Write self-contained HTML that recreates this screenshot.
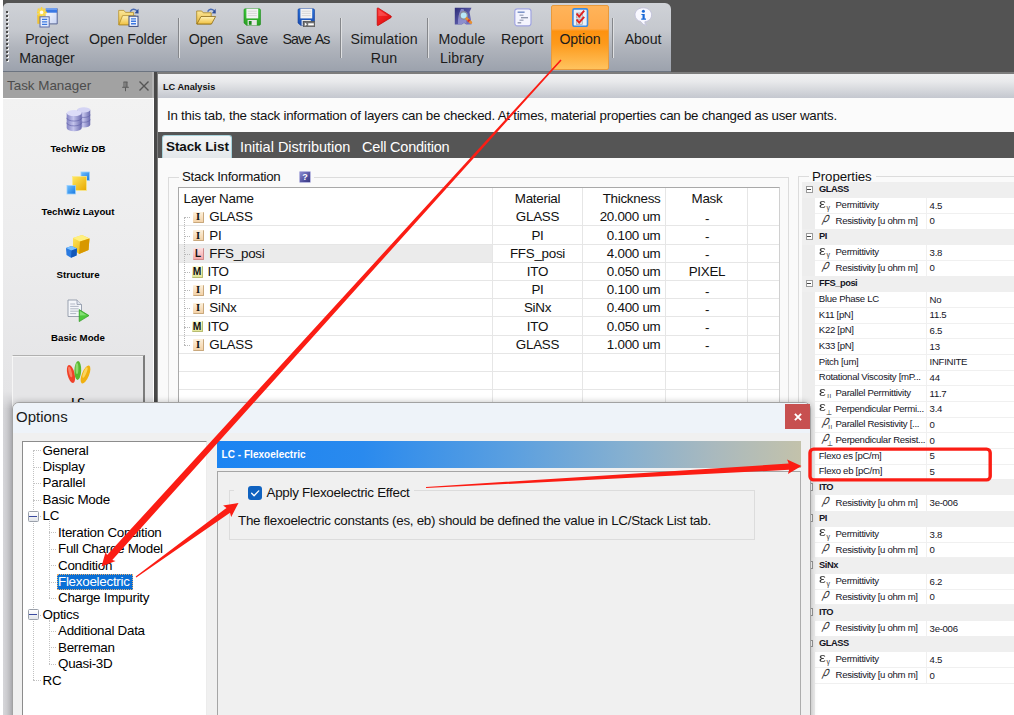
<!DOCTYPE html>
<html><head><meta charset="utf-8"><title>LC Analysis</title>
<style>
*{box-sizing:border-box;margin:0;padding:0}
html,body{width:1014px;height:715px;overflow:hidden;background:#fff;font-family:"Liberation Sans",sans-serif;}
.a{position:absolute}
.t{position:absolute;white-space:nowrap;color:#000}
#tb{left:3px;top:3px;width:668px;height:67.8px;background:linear-gradient(#cfd2d7 0%,#c5c8ce 40%,#b0b4bc 66%,#9ca2ad 100%);border-radius:5px 6px 0 0}
.tbl{position:absolute;font-size:14.2px;color:#1c1c1c;text-align:center;line-height:19px;white-space:nowrap;transform:translateX(-50%);letter-spacing:-0.1px}
.sep{position:absolute;top:18px;width:1px;height:40px;background:#85878b;box-shadow:1px 0 0 #dfe0e2}
.sbl{position:absolute;font-size:9.7px;font-weight:bold;color:#000;white-space:nowrap;transform:translateX(-50%);left:78px}
.tc{position:absolute;font-size:13.4px;letter-spacing:-0.27px;white-space:nowrap;color:#111;line-height:18px}
.cc{transform:translateX(-50%)}
.pn{position:absolute;font-size:9.6px;letter-spacing:-0.3px;color:#15151f;white-space:nowrap;line-height:15px}
.pb{font-weight:bold;font-size:9.3px;letter-spacing:-0.45px}
.ti{position:absolute;font-size:13.4px;letter-spacing:-0.27px;color:#000;white-space:nowrap;line-height:17px}
</style></head><body>
<div class="a" style="left:3px;top:0;width:1011px;height:72.3px;background:#535353"></div>
<div class="a" id="tb"></div>
<div class="a" style="left:3px;top:70.7px;width:668px;height:1.4px;background:#6c7480"></div>
<div class="a" style="left:157px;top:72px;width:857px;height:2px;background:#7c7c7c"></div>
<div class="a" style="left:6px;top:11px;width:2px;height:2px;background:#4a4a4a;box-shadow:1px 1px 0 #f4f4f4"></div>
<div class="a" style="left:6px;top:15px;width:2px;height:2px;background:#4a4a4a;box-shadow:1px 1px 0 #f4f4f4"></div>
<div class="a" style="left:6px;top:19px;width:2px;height:2px;background:#4a4a4a;box-shadow:1px 1px 0 #f4f4f4"></div>
<div class="a" style="left:6px;top:23px;width:2px;height:2px;background:#4a4a4a;box-shadow:1px 1px 0 #f4f4f4"></div>
<div class="a" style="left:6px;top:27px;width:2px;height:2px;background:#4a4a4a;box-shadow:1px 1px 0 #f4f4f4"></div>
<div class="a" style="left:6px;top:31px;width:2px;height:2px;background:#4a4a4a;box-shadow:1px 1px 0 #f4f4f4"></div>
<div class="a" style="left:6px;top:35px;width:2px;height:2px;background:#4a4a4a;box-shadow:1px 1px 0 #f4f4f4"></div>
<div class="a" style="left:6px;top:39px;width:2px;height:2px;background:#4a4a4a;box-shadow:1px 1px 0 #f4f4f4"></div>
<div class="a" style="left:6px;top:43px;width:2px;height:2px;background:#4a4a4a;box-shadow:1px 1px 0 #f4f4f4"></div>
<div class="a" style="left:6px;top:47px;width:2px;height:2px;background:#4a4a4a;box-shadow:1px 1px 0 #f4f4f4"></div>
<div class="a" style="left:6px;top:51px;width:2px;height:2px;background:#4a4a4a;box-shadow:1px 1px 0 #f4f4f4"></div>
<div class="a" style="left:6px;top:55px;width:2px;height:2px;background:#4a4a4a;box-shadow:1px 1px 0 #f4f4f4"></div>
<div class="a" style="left:6px;top:59px;width:2px;height:2px;background:#4a4a4a;box-shadow:1px 1px 0 #f4f4f4"></div>
<div class="a" style="left:551px;top:5px;width:58px;height:65px;background:linear-gradient(#ffb45a 0%,#ffa94a 36%,#fd9210 40%,#fd9a1c 60%,#ffc35e 100%);border:1px solid #e89a3c;border-radius:2px"></div>
<div class="tbl" style="left:47px;top:30px">Project<br>Manager</div>
<div class="tbl" style="left:128px;top:30px">Open Folder</div>
<div class="tbl" style="left:206px;top:30px">Open</div>
<div class="tbl" style="left:252px;top:30px">Save</div>
<div class="tbl" style="left:306px;top:30px;letter-spacing:-0.95px;word-spacing:1.6px">Save As</div>
<div class="tbl" style="left:384px;top:30px;letter-spacing:0.1px">Simulation<br>Run</div>
<div class="tbl" style="left:462px;top:30px;letter-spacing:0.1px">Module<br>Library</div>
<div class="tbl" style="left:522px;top:30px">Report</div>
<div class="tbl" style="left:580px;top:30px">Option</div>
<div class="tbl" style="left:643px;top:30px">About</div>
<div class="sep" style="left:178px"></div>
<div class="sep" style="left:340px"></div>
<div class="sep" style="left:427px"></div>
<div class="sep" style="left:612px"></div>
<div class="a" style="left:3px;top:72.3px;width:151px;height:26.2px;background:linear-gradient(90deg,#a2a2a2 149.5px,#b4b4b4 149.5px)"></div>
<div class="a" style="left:3px;top:98.5px;width:150px;height:617px;background:linear-gradient(#f2f2f2 0%,#ececed 25%,#e4e4e6 48%,#e2e2e4 100%)"></div>
<div class="a" style="left:153.9px;top:72.3px;width:5px;height:643px;background:linear-gradient(90deg,#484848 3.1px,#7c7c7c 3.1px)"></div>
<div class="t" style="left:7px;top:77px;font-size:13.4px;color:#4c4c4c;letter-spacing:0px;line-height:18px">Task Manager</div>
<div class="a" style="left:12px;top:355px;width:133px;height:60px;background:#e5e5e7;border-top:1px solid #b0b0b0;border-right:2px solid #7c7c7c;border-left:1px solid #f6f6f6;box-shadow:inset 0 1px 0 #f4f4f4"></div>
<div class="sbl" style="top:143.0px">TechWiz DB</div>
<div class="sbl" style="top:205.9px">TechWiz Layout</div>
<div class="sbl" style="top:268.8px">Structure</div>
<div class="sbl" style="top:331.7px">Basic Mode</div>
<div class="sbl" style="top:394.6px">LC</div>
<div class="a" style="left:158px;top:73.8px;width:856px;height:24.2px;background:linear-gradient(#eff0f1 0%,#e9eaec 30%,#d8dade 62%,#c4c7cf 100%)"></div>
<div class="a" style="left:158px;top:98px;width:856px;height:34px;background:#fbfbfb"></div>
<div class="a" style="left:158px;top:132px;width:856px;height:26px;background:#555555"></div>
<div class="a" style="left:158px;top:158px;width:856px;height:557px;background:#fafafa"></div>
<div class="t" style="left:163px;top:80.9px;font-size:9.2px;font-weight:bold;color:#111;line-height:12px">LC Analysis</div>
<div class="t" style="left:167px;top:108px;font-size:13.3px;letter-spacing:-0.238px;color:#111;line-height:16px">In this tab, the stack information of layers can be checked. At times, material properties can be changed as user wants.</div>
<div class="a" style="left:162px;top:135px;width:70px;height:23px;background:linear-gradient(#f4f6f7,#e3e7ea);border:1px solid #a8d4dc;border-bottom:none;border-radius:3px 3px 0 0"></div>
<div class="t" style="left:166px;top:137px;font-size:13.5px;font-weight:bold;color:#111;line-height:20px;letter-spacing:-0.1px">Stack List</div>
<div class="t" style="left:240px;top:137px;font-size:14.5px;color:#fff;line-height:20px;letter-spacing:0">Initial Distribution</div>
<div class="t" style="left:362px;top:137px;font-size:14.5px;color:#fff;line-height:20px;letter-spacing:-0.2px">Cell Condition</div><div class="a" style="left:168px;top:177px;width:621px;height:545px;border:1px solid #dcdcdc"></div>
<div class="a" style="left:179px;top:168px;width:135px;height:16px;background:#fafafa"></div>
<div class="t" style="left:182px;top:169px;font-size:13.3px;letter-spacing:-0.3px;color:#111;line-height:16px">Stack Information</div>
<div class="a" style="left:299px;top:171px;width:12px;height:12px;background:linear-gradient(135deg,#8a8ad0,#4a4a98 70%,#3a3a80);border:1px solid #b8b8e0;border-radius:1px"></div>
<div class="t" style="left:302.3px;top:171.5px;font-size:9px;font-weight:bold;color:#fff;line-height:11px">?</div>
<div class="a" style="left:178px;top:187px;width:602px;height:535px;background:#fff;border:1px solid #a9a9a9;border-right-color:#d0d0d0"></div>
<div class="a" style="left:179px;top:244px;width:313px;height:18px;background:#ebebeb"></div>
<div class="a" style="left:179px;top:225.4px;width:600px;height:1px;background:#e6e6e6"></div>
<div class="a" style="left:179px;top:243.6px;width:600px;height:1px;background:#e6e6e6"></div>
<div class="a" style="left:179px;top:261.8px;width:600px;height:1px;background:#e6e6e6"></div>
<div class="a" style="left:179px;top:280.0px;width:600px;height:1px;background:#e6e6e6"></div>
<div class="a" style="left:179px;top:298.2px;width:600px;height:1px;background:#e6e6e6"></div>
<div class="a" style="left:179px;top:316.4px;width:600px;height:1px;background:#e6e6e6"></div>
<div class="a" style="left:179px;top:334.6px;width:600px;height:1px;background:#e6e6e6"></div>
<div class="a" style="left:179px;top:352.8px;width:600px;height:1px;background:#e6e6e6"></div>
<div class="a" style="left:179px;top:371.0px;width:600px;height:1px;background:#e6e6e6"></div>
<div class="a" style="left:179px;top:389.2px;width:600px;height:1px;background:#e6e6e6"></div>
<div class="a" style="left:492px;top:188px;width:1px;height:530px;background:#e6e6e6"></div>
<div class="a" style="left:582px;top:188px;width:1px;height:530px;background:#e6e6e6"></div>
<div class="a" style="left:665px;top:188px;width:1px;height:530px;background:#e6e6e6"></div>
<div class="a" style="left:747px;top:188px;width:1px;height:530px;background:#e6e6e6"></div>
<div class="tc" style="left:183.5px;top:190.2px">Layer Name</div>
<div class="tc cc" style="left:537.5px;top:190.2px">Material</div>
<div class="tc" style="right:353.5px;top:190.2px">Thickness</div>
<div class="tc cc" style="left:707px;top:190.2px">Mask</div>
<div class="a" style="left:184px;top:217.4px;width:6px;height:0;border-top:1px dotted #b8b8b8"></div>
<div class="a" style="left:192.5px;top:211.7px;width:11.5px;height:11.5px;background:linear-gradient(#fdf0dc,#f3d2a8);border-right:1px solid #c9a87c;border-bottom:1px solid #c9a87c;border-radius:1px"></div>
<div class="t" style="left:196px;top:211.4px;font-family:'Liberation Serif',serif;font-size:10.5px;font-weight:bold;line-height:12px;color:#111">I</div>
<div class="tc" style="left:209.3px;top:208.39999999999998px">GLASS</div>
<div class="tc cc" style="left:537.5px;top:208.39999999999998px">GLASS</div>
<div class="tc" style="right:353.5px;top:208.39999999999998px">20.000 um</div>
<div class="tc cc" style="left:707px;top:210.0px">-</div>
<div class="a" style="left:184px;top:235.6px;width:6px;height:0;border-top:1px dotted #b8b8b8"></div>
<div class="a" style="left:192.5px;top:229.9px;width:11.5px;height:11.5px;background:linear-gradient(#fdf0dc,#f3d2a8);border-right:1px solid #c9a87c;border-bottom:1px solid #c9a87c;border-radius:1px"></div>
<div class="t" style="left:196px;top:229.6px;font-family:'Liberation Serif',serif;font-size:10.5px;font-weight:bold;line-height:12px;color:#111">I</div>
<div class="tc" style="left:209.3px;top:226.6px">PI</div>
<div class="tc cc" style="left:537.5px;top:226.6px">PI</div>
<div class="tc" style="right:353.5px;top:226.6px">0.100 um</div>
<div class="tc cc" style="left:707px;top:228.2px">-</div>
<div class="a" style="left:184px;top:253.8px;width:6px;height:0;border-top:1px dotted #b8b8b8"></div>
<div class="a" style="left:192.5px;top:248.1px;width:11.5px;height:11.5px;background:linear-gradient(#fde0e0,#f4a8a8);border-right:1px solid #d08888;border-bottom:1px solid #d08888;border-radius:1px"></div>
<div class="t" style="left:195.1px;top:247.8px;font-family:'Liberation Sans',serif;font-size:10px;font-weight:bold;line-height:12px;color:#111">L</div>
<div class="tc" style="left:209.3px;top:244.79999999999998px">FFS_posi</div>
<div class="tc cc" style="left:537.5px;top:244.79999999999998px">FFS_posi</div>
<div class="tc" style="right:353.5px;top:244.79999999999998px">4.000 um</div>
<div class="tc cc" style="left:707px;top:246.4px">-</div>
<div class="a" style="left:184px;top:272.0px;width:6px;height:0;border-top:1px dotted #b8b8b8"></div>
<div class="a" style="left:191.5px;top:266.3px;width:11.5px;height:11.5px;background:linear-gradient(#fbfbd8,#e2e69a);border-right:1px solid #b8bc70;border-bottom:1px solid #b8bc70;border-radius:1px"></div>
<div class="t" style="left:192.8px;top:266.0px;font-family:'Liberation Sans',serif;font-size:10.3px;font-weight:bold;line-height:12px;color:#111">M</div>
<div class="tc" style="left:207.5px;top:263.0px">ITO</div>
<div class="tc cc" style="left:537.5px;top:263.0px">ITO</div>
<div class="tc" style="right:353.5px;top:263.0px">0.050 um</div>
<div class="tc cc" style="left:707px;top:263.0px">PIXEL</div>
<div class="a" style="left:184px;top:290.2px;width:6px;height:0;border-top:1px dotted #b8b8b8"></div>
<div class="a" style="left:192.5px;top:284.5px;width:11.5px;height:11.5px;background:linear-gradient(#fdf0dc,#f3d2a8);border-right:1px solid #c9a87c;border-bottom:1px solid #c9a87c;border-radius:1px"></div>
<div class="t" style="left:196px;top:284.2px;font-family:'Liberation Serif',serif;font-size:10.5px;font-weight:bold;line-height:12px;color:#111">I</div>
<div class="tc" style="left:209.3px;top:281.2px">PI</div>
<div class="tc cc" style="left:537.5px;top:281.2px">PI</div>
<div class="tc" style="right:353.5px;top:281.2px">0.100 um</div>
<div class="tc cc" style="left:707px;top:282.8px">-</div>
<div class="a" style="left:184px;top:308.4px;width:6px;height:0;border-top:1px dotted #b8b8b8"></div>
<div class="a" style="left:192.5px;top:302.7px;width:11.5px;height:11.5px;background:linear-gradient(#fdf0dc,#f3d2a8);border-right:1px solid #c9a87c;border-bottom:1px solid #c9a87c;border-radius:1px"></div>
<div class="t" style="left:196px;top:302.4px;font-family:'Liberation Serif',serif;font-size:10.5px;font-weight:bold;line-height:12px;color:#111">I</div>
<div class="tc" style="left:209.3px;top:299.4px">SiNx</div>
<div class="tc cc" style="left:537.5px;top:299.4px">SiNx</div>
<div class="tc" style="right:353.5px;top:299.4px">0.400 um</div>
<div class="tc cc" style="left:707px;top:301.0px">-</div>
<div class="a" style="left:184px;top:326.6px;width:6px;height:0;border-top:1px dotted #b8b8b8"></div>
<div class="a" style="left:191.5px;top:320.9px;width:11.5px;height:11.5px;background:linear-gradient(#fbfbd8,#e2e69a);border-right:1px solid #b8bc70;border-bottom:1px solid #b8bc70;border-radius:1px"></div>
<div class="t" style="left:192.8px;top:320.6px;font-family:'Liberation Sans',serif;font-size:10.3px;font-weight:bold;line-height:12px;color:#111">M</div>
<div class="tc" style="left:207.5px;top:317.59999999999997px">ITO</div>
<div class="tc cc" style="left:537.5px;top:317.59999999999997px">ITO</div>
<div class="tc" style="right:353.5px;top:317.59999999999997px">0.050 um</div>
<div class="tc cc" style="left:707px;top:319.2px">-</div>
<div class="a" style="left:184px;top:344.8px;width:6px;height:0;border-top:1px dotted #b8b8b8"></div>
<div class="a" style="left:192.5px;top:339.1px;width:11.5px;height:11.5px;background:linear-gradient(#fdf0dc,#f3d2a8);border-right:1px solid #c9a87c;border-bottom:1px solid #c9a87c;border-radius:1px"></div>
<div class="t" style="left:196px;top:338.8px;font-family:'Liberation Serif',serif;font-size:10.5px;font-weight:bold;line-height:12px;color:#111">I</div>
<div class="tc" style="left:209.3px;top:335.79999999999995px">GLASS</div>
<div class="tc cc" style="left:537.5px;top:335.79999999999995px">GLASS</div>
<div class="tc" style="right:353.5px;top:335.79999999999995px">1.000 um</div>
<div class="tc cc" style="left:707px;top:337.4px">-</div>
<div class="a" style="left:184px;top:217px;width:0;height:128px;border-left:1px dotted #b8b8b8"></div>
<div class="a" style="left:798px;top:176px;width:230px;height:545px;border:1px solid #dcdcdc"></div>
<div class="a" style="left:809px;top:168px;width:67px;height:15px;background:#fafafa"></div>
<div class="t" style="left:812px;top:169px;font-size:13.3px;letter-spacing:-0.1px;color:#111;line-height:16px">Properties</div>
<div class="a" style="left:802px;top:183px;width:212px;height:532px;background:#fff"></div>
<div class="a" style="left:802px;top:183px;width:13px;height:532px;background:#ededed"></div>
<div class="a" style="left:802px;top:181.9px;width:212px;height:16.1px;background:#efefef"></div>
<div class="a" style="left:805.5px;top:185.5px;width:7.5px;height:7.5px;border:1px solid #9a9a9a;background:#fff"></div>
<div class="a" style="left:807.3px;top:188.8px;width:4px;height:1px;background:#444"></div>
<div class="pn pb" style="left:819px;top:182.2px">GLASS</div>
<div class="a" style="left:815px;top:212.9px;width:199px;height:1px;background:#f0f0f0"></div>
<div class="t" style="left:819.3px;top:196.6px;font-size:12.3px;transform:scaleX(1.25);transform-origin:left;line-height:15px;color:#3a3a3a">&#949;</div>
<div class="t" style="left:826.6px;top:203.2px;font-size:7px;line-height:9px;color:#333">&#947;</div>
<div class="pn" style="left:835.5px;top:197.1px">Permittivity</div>
<div class="pn" style="left:929.6px;top:197.7px">4.5</div>
<div class="a" style="left:815px;top:228.6px;width:199px;height:1px;background:#f0f0f0"></div>
<div class="t" style="left:822.6px;top:210.6px;font-size:12.2px;font-style:italic;line-height:15px;color:#333;transform:skewX(-16deg) scale(0.86,1.1)">&#961;</div>
<div class="pn" style="left:835.5px;top:212.7px">Resistivity [u ohm m]</div>
<div class="pn" style="left:929.6px;top:213.3px">0</div>
<div class="a" style="left:802px;top:228.9px;width:212px;height:16.1px;background:#efefef"></div>
<div class="a" style="left:805.5px;top:232.5px;width:7.5px;height:7.5px;border:1px solid #9a9a9a;background:#fff"></div>
<div class="a" style="left:807.3px;top:235.8px;width:4px;height:1px;background:#444"></div>
<div class="pn pb" style="left:819px;top:229.2px">PI</div>
<div class="a" style="left:815px;top:259.9px;width:199px;height:1px;background:#f0f0f0"></div>
<div class="t" style="left:819.3px;top:243.5px;font-size:12.3px;transform:scaleX(1.25);transform-origin:left;line-height:15px;color:#3a3a3a">&#949;</div>
<div class="t" style="left:826.6px;top:250.1px;font-size:7px;line-height:9px;color:#333">&#947;</div>
<div class="pn" style="left:835.5px;top:244.0px">Permittivity</div>
<div class="pn" style="left:929.6px;top:244.6px">3.8</div>
<div class="a" style="left:815px;top:275.6px;width:199px;height:1px;background:#f0f0f0"></div>
<div class="t" style="left:822.6px;top:257.6px;font-size:12.2px;font-style:italic;line-height:15px;color:#333;transform:skewX(-16deg) scale(0.86,1.1)">&#961;</div>
<div class="pn" style="left:835.5px;top:259.7px">Resistivity [u ohm m]</div>
<div class="pn" style="left:929.6px;top:260.3px">0</div>
<div class="a" style="left:802px;top:275.9px;width:212px;height:16.1px;background:#efefef"></div>
<div class="a" style="left:805.5px;top:279.5px;width:7.5px;height:7.5px;border:1px solid #9a9a9a;background:#fff"></div>
<div class="a" style="left:807.3px;top:282.8px;width:4px;height:1px;background:#444"></div>
<div class="pn pb" style="left:819px;top:276.2px">FFS_posi</div>
<div class="a" style="left:815px;top:306.9px;width:199px;height:1px;background:#f0f0f0"></div>
<div class="pn" style="left:818.8px;top:291.0px">Blue Phase LC</div>
<div class="pn" style="left:929.6px;top:291.6px">No</div>
<div class="a" style="left:815px;top:322.5px;width:199px;height:1px;background:#f0f0f0"></div>
<div class="pn" style="left:818.8px;top:306.7px">K11 [pN]</div>
<div class="pn" style="left:929.6px;top:307.3px">11.5</div>
<div class="a" style="left:815px;top:338.2px;width:199px;height:1px;background:#f0f0f0"></div>
<div class="pn" style="left:818.8px;top:322.3px">K22 [pN]</div>
<div class="pn" style="left:929.6px;top:322.9px">6.5</div>
<div class="a" style="left:815px;top:353.9px;width:199px;height:1px;background:#f0f0f0"></div>
<div class="pn" style="left:818.8px;top:338.0px">K33 [pN]</div>
<div class="pn" style="left:929.6px;top:338.6px">13</div>
<div class="a" style="left:815px;top:369.5px;width:199px;height:1px;background:#f0f0f0"></div>
<div class="pn" style="left:818.8px;top:353.7px">Pitch [um]</div>
<div class="pn" style="left:929.6px;top:354.3px">INFINITE</div>
<div class="a" style="left:815px;top:385.2px;width:199px;height:1px;background:#f0f0f0"></div>
<div class="pn" style="left:818.8px;top:369.3px">Rotational Viscosity [mP...</div>
<div class="pn" style="left:929.6px;top:369.9px">44</div>
<div class="a" style="left:815px;top:400.8px;width:199px;height:1px;background:#f0f0f0"></div>
<div class="t" style="left:819.3px;top:384.5px;font-size:12.3px;transform:scaleX(1.25);transform-origin:left;line-height:15px;color:#3a3a3a">&#949;</div>
<div class="t" style="left:827.2px;top:391.7px;font-size:6px;line-height:9px;letter-spacing:0.6px;color:#222">II</div>
<div class="pn" style="left:835.5px;top:385.0px">Parallel Permittivity</div>
<div class="pn" style="left:929.6px;top:385.6px">11.7</div>
<div class="a" style="left:815px;top:416.5px;width:199px;height:1px;background:#f0f0f0"></div>
<div class="t" style="left:819.3px;top:400.1px;font-size:12.3px;transform:scaleX(1.25);transform-origin:left;line-height:15px;color:#3a3a3a">&#949;</div>
<div class="t" style="left:826.2px;top:407.5px;font-size:6.5px;line-height:9px;color:#222">&#8869;</div>
<div class="pn" style="left:835.5px;top:400.6px">Perpendicular Permi...</div>
<div class="pn" style="left:929.6px;top:401.2px">3.4</div>
<div class="a" style="left:815px;top:432.2px;width:199px;height:1px;background:#f0f0f0"></div>
<div class="t" style="left:822.6px;top:414.2px;font-size:12.2px;font-style:italic;line-height:15px;color:#333;transform:skewX(-16deg) scale(0.86,1.1)">&#961;</div>
<div class="t" style="left:828.2px;top:423.0px;font-size:6px;line-height:9px;letter-spacing:0.6px;color:#222">II</div>
<div class="pn" style="left:835.5px;top:416.3px">Parallel Resistivity [...</div>
<div class="pn" style="left:929.6px;top:416.9px">0</div>
<div class="a" style="left:815px;top:447.8px;width:199px;height:1px;background:#f0f0f0"></div>
<div class="t" style="left:822.6px;top:429.9px;font-size:12.2px;font-style:italic;line-height:15px;color:#333;transform:skewX(-16deg) scale(0.86,1.1)">&#961;</div>
<div class="t" style="left:827px;top:438.9px;font-size:6.5px;line-height:9px;color:#222">&#8869;</div>
<div class="pn" style="left:835.5px;top:432.0px">Perpendicular Resist...</div>
<div class="pn" style="left:929.6px;top:432.6px">0</div>
<div class="a" style="left:815px;top:463.5px;width:199px;height:1px;background:#f0f0f0"></div>
<div class="pn" style="left:818.8px;top:447.6px">Flexo es [pC/m]</div>
<div class="pn" style="left:929.6px;top:448.2px">5</div>
<div class="a" style="left:815px;top:479.1px;width:199px;height:1px;background:#f0f0f0"></div>
<div class="pn" style="left:818.8px;top:463.3px">Flexo eb [pC/m]</div>
<div class="pn" style="left:929.6px;top:463.9px">5</div>
<div class="a" style="left:802px;top:479.4px;width:212px;height:16.1px;background:#efefef"></div>
<div class="a" style="left:805.5px;top:483.0px;width:7.5px;height:7.5px;border:1px solid #9a9a9a;background:#fff"></div>
<div class="a" style="left:807.3px;top:486.3px;width:4px;height:1px;background:#444"></div>
<div class="pn pb" style="left:819px;top:479.7px">ITO</div>
<div class="a" style="left:815px;top:510.5px;width:199px;height:1px;background:#f0f0f0"></div>
<div class="t" style="left:822.6px;top:492.5px;font-size:12.2px;font-style:italic;line-height:15px;color:#333;transform:skewX(-16deg) scale(0.86,1.1)">&#961;</div>
<div class="pn" style="left:835.5px;top:494.6px">Resistivity [u ohm m]</div>
<div class="pn" style="left:929.6px;top:495.2px">3e-006</div>
<div class="a" style="left:802px;top:510.8px;width:212px;height:16.1px;background:#efefef"></div>
<div class="a" style="left:805.5px;top:514.4px;width:7.5px;height:7.5px;border:1px solid #9a9a9a;background:#fff"></div>
<div class="a" style="left:807.3px;top:517.7px;width:4px;height:1px;background:#444"></div>
<div class="pn pb" style="left:819px;top:511.1px">PI</div>
<div class="a" style="left:815px;top:541.8px;width:199px;height:1px;background:#f0f0f0"></div>
<div class="t" style="left:819.3px;top:525.4px;font-size:12.3px;transform:scaleX(1.25);transform-origin:left;line-height:15px;color:#3a3a3a">&#949;</div>
<div class="t" style="left:826.6px;top:532.0px;font-size:7px;line-height:9px;color:#333">&#947;</div>
<div class="pn" style="left:835.5px;top:525.9px">Permittivity</div>
<div class="pn" style="left:929.6px;top:526.5px">3.8</div>
<div class="a" style="left:815px;top:557.4px;width:199px;height:1px;background:#f0f0f0"></div>
<div class="t" style="left:822.6px;top:539.5px;font-size:12.2px;font-style:italic;line-height:15px;color:#333;transform:skewX(-16deg) scale(0.86,1.1)">&#961;</div>
<div class="pn" style="left:835.5px;top:541.6px">Resistivity [u ohm m]</div>
<div class="pn" style="left:929.6px;top:542.2px">0</div>
<div class="a" style="left:802px;top:557.7px;width:212px;height:16.1px;background:#efefef"></div>
<div class="a" style="left:805.5px;top:561.3px;width:7.5px;height:7.5px;border:1px solid #9a9a9a;background:#fff"></div>
<div class="a" style="left:807.3px;top:564.6px;width:4px;height:1px;background:#444"></div>
<div class="pn pb" style="left:819px;top:558.0px">SiNx</div>
<div class="a" style="left:815px;top:588.8px;width:199px;height:1px;background:#f0f0f0"></div>
<div class="t" style="left:819.3px;top:572.4px;font-size:12.3px;transform:scaleX(1.25);transform-origin:left;line-height:15px;color:#3a3a3a">&#949;</div>
<div class="t" style="left:826.6px;top:579.0px;font-size:7px;line-height:9px;color:#333">&#947;</div>
<div class="pn" style="left:835.5px;top:572.9px">Permittivity</div>
<div class="pn" style="left:929.6px;top:573.5px">6.2</div>
<div class="a" style="left:815px;top:604.4px;width:199px;height:1px;background:#f0f0f0"></div>
<div class="t" style="left:822.6px;top:586.5px;font-size:12.2px;font-style:italic;line-height:15px;color:#333;transform:skewX(-16deg) scale(0.86,1.1)">&#961;</div>
<div class="pn" style="left:835.5px;top:588.6px">Resistivity [u ohm m]</div>
<div class="pn" style="left:929.6px;top:589.2px">0</div>
<div class="a" style="left:802px;top:604.7px;width:212px;height:16.1px;background:#efefef"></div>
<div class="a" style="left:805.5px;top:608.3px;width:7.5px;height:7.5px;border:1px solid #9a9a9a;background:#fff"></div>
<div class="a" style="left:807.3px;top:611.6px;width:4px;height:1px;background:#444"></div>
<div class="pn pb" style="left:819px;top:605.0px">ITO</div>
<div class="a" style="left:815px;top:635.7px;width:199px;height:1px;background:#f0f0f0"></div>
<div class="t" style="left:822.6px;top:617.8px;font-size:12.2px;font-style:italic;line-height:15px;color:#333;transform:skewX(-16deg) scale(0.86,1.1)">&#961;</div>
<div class="pn" style="left:835.5px;top:619.9px">Resistivity [u ohm m]</div>
<div class="pn" style="left:929.6px;top:620.5px">3e-006</div>
<div class="a" style="left:802px;top:636.0px;width:212px;height:16.1px;background:#efefef"></div>
<div class="a" style="left:805.5px;top:639.6px;width:7.5px;height:7.5px;border:1px solid #9a9a9a;background:#fff"></div>
<div class="a" style="left:807.3px;top:642.9px;width:4px;height:1px;background:#444"></div>
<div class="pn pb" style="left:819px;top:636.3px">GLASS</div>
<div class="a" style="left:815px;top:667.1px;width:199px;height:1px;background:#f0f0f0"></div>
<div class="t" style="left:819.3px;top:650.7px;font-size:12.3px;transform:scaleX(1.25);transform-origin:left;line-height:15px;color:#3a3a3a">&#949;</div>
<div class="t" style="left:826.6px;top:657.3px;font-size:7px;line-height:9px;color:#333">&#947;</div>
<div class="pn" style="left:835.5px;top:651.2px">Permittivity</div>
<div class="pn" style="left:929.6px;top:651.8px">4.5</div>
<div class="a" style="left:815px;top:682.7px;width:199px;height:1px;background:#f0f0f0"></div>
<div class="t" style="left:822.6px;top:664.8px;font-size:12.2px;font-style:italic;line-height:15px;color:#333;transform:skewX(-16deg) scale(0.86,1.1)">&#961;</div>
<div class="pn" style="left:835.5px;top:666.9px">Resistivity [u ohm m]</div>
<div class="pn" style="left:929.6px;top:667.5px">0</div>
<div class="a" style="left:926px;top:197.6px;width:1px;height:485.5px;background:#f0f0f0"></div>
<div class="a" style="left:926px;top:228.9px;width:1px;height:16.1px;background:#efefef"></div>
<div class="a" style="left:926px;top:275.9px;width:1px;height:16.1px;background:#efefef"></div>
<div class="a" style="left:926px;top:479.4px;width:1px;height:16.1px;background:#efefef"></div>
<div class="a" style="left:926px;top:510.8px;width:1px;height:16.1px;background:#efefef"></div>
<div class="a" style="left:926px;top:557.7px;width:1px;height:16.1px;background:#efefef"></div>
<div class="a" style="left:926px;top:604.7px;width:1px;height:16.1px;background:#efefef"></div>
<div class="a" style="left:926px;top:636.0px;width:1px;height:16.1px;background:#efefef"></div><svg class="a" width="0" height="0"><defs>
<linearGradient id="gF" x1="0" y1="0" x2="0" y2="1"><stop offset="0" stop-color="#fbe89a"/><stop offset="1" stop-color="#e9b535"/></linearGradient>
<linearGradient id="gF2" x1="0" y1="0" x2="0" y2="1"><stop offset="0" stop-color="#fff3b8"/><stop offset="1" stop-color="#f0c040"/></linearGradient>
<linearGradient id="gG" x1="0" y1="0" x2="0" y2="1"><stop offset="0" stop-color="#3cc83c"/><stop offset="1" stop-color="#2aa022"/></linearGradient>
<linearGradient id="gB" x1="0" y1="0" x2="0" y2="1"><stop offset="0" stop-color="#2a72d8"/><stop offset="1" stop-color="#1a4cb0"/></linearGradient>
<linearGradient id="gR" x1="0" y1="0" x2="1" y2="1"><stop offset="0" stop-color="#ff3030"/><stop offset="1" stop-color="#d80808"/></linearGradient>
<linearGradient id="gW" x1="0" y1="0" x2="1" y2="1"><stop offset="0" stop-color="#ffffff"/><stop offset="1" stop-color="#c8d4f4"/></linearGradient>
<linearGradient id="gP" x1="0" y1="0" x2="1" y2="1"><stop offset="0" stop-color="#2c2c78"/><stop offset="1" stop-color="#7a7ac8"/></linearGradient>
<linearGradient id="gDB" x1="0" y1="0" x2="1" y2="0"><stop offset="0" stop-color="#8484c4"/><stop offset="0.45" stop-color="#c4c4ec"/><stop offset="1" stop-color="#6a6aae"/></linearGradient>
<linearGradient id="gY" x1="0" y1="0" x2="1" y2="1"><stop offset="0" stop-color="#ffe860"/><stop offset="1" stop-color="#e8a800"/></linearGradient>
<linearGradient id="gBl" x1="0" y1="0" x2="1" y2="1"><stop offset="0" stop-color="#70c0ff"/><stop offset="1" stop-color="#1878e0"/></linearGradient>
</defs></svg>
<svg class="a" style="left:36.5px;top:6.5px" width="21" height="21" viewBox="0 0 21 21">
<defs><radialGradient id="gS" cx="0.5" cy="0.5" r="0.5"><stop offset="0" stop-color="#fffdf0"/><stop offset="0.35" stop-color="#ffe860"/><stop offset="1" stop-color="#f4c020" stop-opacity="0.25"/></radialGradient></defs>
<rect x="0.3" y="8" width="3.2" height="8.8" fill="#f0c030"/>
<rect x="8.6" y="1.4" width="11.4" height="15.2" fill="url(#gW)"/>
<path d="M20.2 1.4 V16.9 H8.6" fill="none" stroke="#5a6898" stroke-width="1"/>
<rect x="8.6" y="1.4" width="11.4" height="4.3" fill="#3a78e4"/><rect x="8.6" y="1.4" width="11.4" height="1.6" fill="#6a9cf0"/>
<circle cx="4.6" cy="5.4" r="5.2" fill="url(#gS)"/>
<path d="M4.6 0 V10.8 M-0.8 5.4 H10 M0.8 1.6 L8.4 9.2 M8.4 1.6 L0.8 9.2" stroke="#ffd830" stroke-width="1.1" opacity="0.9"/>
<circle cx="4.6" cy="5.4" r="1.8" fill="#fffef4"/>
<rect x="3" y="9.8" width="9.2" height="10.2" fill="#e4ecfc" stroke="#5a6ca8" stroke-width="1"/>
<path d="M5 12.4h5.2M5 14.9h5.2M5 17.4h5.2" stroke="#3c78e0" stroke-width="1.4"/></svg>
<svg class="a" style="left:118px;top:7px" width="21" height="20" viewBox="0 0 21 20">
<path d="M12.2 4.6 Q15 0.2 19 3.8" fill="none" stroke="#4a6cb4" stroke-width="1.5"/><path d="M16.6 6.2 L20.4 1.8 L20.6 6.6 Z" fill="#2c4c98"/>
<path d="M0.7 17.8 V3.4 h5.2 l1.6 2 h8 V17.8 Z" fill="url(#gF)" stroke="#b8902a" stroke-width="0.8"/>
<path d="M0.9 17.8 L4.6 8.6 H17.4 L13.8 17.8 Z" fill="url(#gF2)" stroke="#a88424" stroke-width="0.7"/>
<rect x="11" y="9.2" width="9" height="10.2" fill="#eef2fc" stroke="#3c4c80" stroke-width="1"/>
<path d="M13 11.9h5M13 14.3h5M13 16.7h5" stroke="#3c78e0" stroke-width="1.4"/></svg>
<svg class="a" style="left:196px;top:7px" width="21" height="20" viewBox="0 0 21 20">
<path d="M11.6 4.6 Q14.4 0.2 18.2 3.8" fill="none" stroke="#4a6cb4" stroke-width="1.5"/><path d="M15.8 6.2 L19.6 1.8 L19.8 6.6 Z" fill="#2c4c98"/>
<path d="M0.7 17 V4 h5 l1.5 1.8 h8 V17 Z" fill="url(#gF)" stroke="#a88420" stroke-width="0.8"/>
<path d="M0.9 17 L5 9.5 H19.6 L15.5 17 Z" fill="url(#gF2)" stroke="#8a6a18" stroke-width="0.8"/></svg>
<svg class="a" style="left:242.5px;top:7.6px" width="19" height="19" viewBox="0 0 19 19">
<path d="M1 2 Q1 0.8 2.2 0.8 H16 Q17.5 0.8 17.5 2.2 V16 Q17.5 17.3 16.2 17.3 H3.5 L1 15 Z" fill="url(#gG)" stroke="#1c8a1c" stroke-width="0.6"/>
<rect x="3.4" y="0.8" width="11.8" height="9.6" fill="#f3f3f3"/>
<path d="M4.8 3.2h9M4.8 5.4h9M4.8 7.6h9" stroke="#d2d2d2" stroke-width="0.9"/>
<rect x="4.6" y="12" width="9.2" height="5.3" fill="#e6e6e6"/>
<rect x="5.8" y="13" width="2.8" height="3.8" fill="#1c8a1c"/></svg>
<svg class="a" style="left:296.5px;top:7.6px" width="19" height="19" viewBox="0 0 19 19">
<path d="M1 2 Q1 0.8 2.2 0.8 H16 Q17.5 0.8 17.5 2.2 V16 Q17.5 17.3 16.2 17.3 H3.5 L1 15 Z" fill="url(#gB)" stroke="#143c98" stroke-width="0.6"/>
<rect x="3.4" y="0.8" width="11.8" height="9.6" fill="#f3f3f3"/>
<path d="M4.8 3.2h9M4.8 5.4h9M4.8 7.6h9" stroke="#d2d2d2" stroke-width="0.9"/>
<rect x="4.6" y="12" width="9.2" height="5.3" fill="#e6e6e6"/>
<rect x="5.8" y="13" width="2.8" height="3.8" fill="#143c98"/></svg>
<svg class="a" style="left:303px;top:20.6px" width="12.4" height="6.6" viewBox="0 0 12.4 6.6"><rect x="0.4" y="0.4" width="11.6" height="5.8" fill="#707070" stroke="#585858" stroke-width="0.8"/><path d="M1.8 1.5 L4 3.3 L1.8 5.1 Z" fill="#fff"/><rect x="5.2" y="2.3" width="5.6" height="2.1" fill="#fff"/></svg>
<svg class="a" style="left:375.5px;top:7px" width="17" height="20" viewBox="0 0 17 20"><path d="M1.2 1.6 Q1.2 0.6 2.2 1 L15 9 Q16 9.8 15 10.6 L2.2 18.4 Q1.2 18.9 1.2 17.8 Z" fill="url(#gR)" stroke="#c00000" stroke-width="0.7"/><path d="M2.4 2.6 L12 8.8 L2.4 9 Z" fill="#ff6a6a" opacity="0.55"/></svg>
<svg class="a" style="left:453.5px;top:7.2px" width="19" height="19" viewBox="0 0 19 19">
<path d="M0.8 0.8 H17.5 L15.5 5 Q17 12 17.5 17.5 H12 Q10 15 8 17.5 H0.8 Z" fill="url(#gP)"/>
<path d="M7 2 Q3.5 9 4 17 L8 17 Q10.5 14.5 12.5 17 Q12.5 8 9.5 2 Z" fill="#9c9cd8" opacity="0.75"/>
<circle cx="9.7" cy="8.5" r="3.7" fill="#b8e8f8" stroke="#8a8a9a" stroke-width="1.4"/>
<path d="M12.6 11.6 L16.8 15.6" stroke="#e89030" stroke-width="2.8" stroke-linecap="round"/>
<path d="M14 13 L15.4 14.3" stroke="#d03030" stroke-width="2.6"/></svg>
<svg class="a" style="left:513.5px;top:7.8px" width="18" height="19" viewBox="0 0 18 19">
<rect x="0.8" y="0.8" width="16.2" height="17" rx="2.5" fill="#f4f4fe" stroke="#a0a4e0" stroke-width="1.2"/>
<path d="M3.6 4.2h7" stroke="#7890c8" stroke-width="1.5"/><path d="M5.5 7.2h4" stroke="#98a0b8" stroke-width="1.2"/><path d="M7 9.7h7" stroke="#8890a8" stroke-width="1.3"/><path d="M5.5 12.2h4" stroke="#98a0b8" stroke-width="1.2"/><path d="M3.6 14.8h3.6" stroke="#8890a8" stroke-width="1.3"/></svg>
<svg class="a" style="left:571.5px;top:7.6px" width="17" height="19.5" viewBox="0 0 17 19.5">
<rect x="0.9" y="0.9" width="14.6" height="17.4" rx="1.5" fill="#eaf0f8" stroke="#3c8ae0" stroke-width="1.6"/>
<rect x="4.3" y="5" width="6" height="5" fill="#dcdcdc" stroke="#9a9a9a" stroke-width="0.6"/><rect x="4.3" y="11.4" width="6" height="5" fill="#dcdcdc" stroke="#9a9a9a" stroke-width="0.6"/>
<path d="M4.6 5.6 L7.2 8.6 L12.2 2.6" fill="none" stroke="#e02020" stroke-width="1.9"/>
<path d="M4.6 11.6 L7.2 14.6 L12.2 8.8" fill="none" stroke="#e02020" stroke-width="1.9"/></svg>
<svg class="a" style="left:633.5px;top:7px" width="19" height="20" viewBox="0 0 19 20">
<path d="M9.3 0.8 C14.2 0.8 17.6 3.8 17.6 7.8 C17.6 11.5 14.8 14.2 10.8 14.8 Q10.8 17 12.6 18.4 Q8.4 18 6.8 14.6 C3.2 13.8 1 11.2 1 7.8 C1 3.8 4.4 0.8 9.3 0.8 Z" fill="#f8f8ff" stroke="#c0c0d8" stroke-width="0.9"/>
<circle cx="9.4" cy="4.3" r="1.55" fill="#1868d8"/><path d="M7.4 6.9 H10.7 V11.6 H12 V12.8 H7.2 V11.6 H8.5 V8.1 H7.4 Z" fill="#1868d8"/></svg>
<svg class="a" style="left:121.3px;top:80.5px" width="9" height="11" viewBox="0 0 9 11"><path d="M2.5 1 H6.5 M3 1 V6 M6 1 V6 M5 1 V6 M1.2 6.3 H7.8 M4.5 6.3 V10.2" fill="none" stroke="#5a5a5a" stroke-width="1"/></svg>
<svg class="a" style="left:138px;top:80px" width="12" height="12" viewBox="0 0 12 12"><path d="M1.5 1.5 L10.5 10.5 M10.5 1.5 L1.5 10.5" stroke="#555" stroke-width="1.4"/></svg>
<svg class="a" style="left:63.5px;top:105.5px" width="30" height="28" viewBox="0 0 28 26">
<g><path d="M12.5 3.5 v14 a6 2.6 0 0 0 12 0 v-14 Z" fill="url(#gDB)"/><ellipse cx="18.5" cy="3.5" rx="6" ry="2.4" fill="#d4d4f4"/>
<path d="M12.5 8 a6 2.6 0 0 0 12 0 M12.5 12.5 a6 2.6 0 0 0 12 0" fill="none" stroke="#5c5ca4" stroke-width="0.7" opacity="0.8"/></g>
<g><path d="M2.5 6.5 v14 a7 3 0 0 0 14 0 v-14 Z" fill="url(#gDB)"/><ellipse cx="9.5" cy="6.5" rx="7" ry="2.8" fill="#dcdcf8"/>
<path d="M2.5 11 a7 3 0 0 0 14 0 M2.5 15.5 a7 3 0 0 0 14 0" fill="none" stroke="#5c5ca4" stroke-width="0.7" opacity="0.8"/></g></svg>
<svg class="a" style="left:66px;top:170.5px" width="25" height="25" viewBox="0 0 25 25">
<rect x="15" y="1" width="8.5" height="8.5" fill="url(#gBl)" stroke="#98d0ff" stroke-width="0.8"/>
<rect x="6.5" y="5.5" width="14" height="14" fill="url(#gY)" stroke="#f8e890" stroke-width="0.8"/>
<rect x="1" y="14.5" width="8.5" height="8.5" fill="url(#gBl)" stroke="#98d0ff" stroke-width="0.8"/></svg>
<svg class="a" style="left:65px;top:233px" width="26" height="26" viewBox="0 0 26 26">
<path d="M8 5 L17 2 L24.5 5.5 L23.5 17 L14 21 L8 16 Z" fill="url(#gY)"/><path d="M8 5 L17 2 L24.5 5.5 L15 8.5 Z" fill="#fff080"/><path d="M15 8.5 L24.5 5.5 L23.5 17 L14 21 Z" fill="#d89800"/>
<path d="M1 15 L6.5 13 L12 15.5 L11.5 22.5 L6 24.8 L1.5 22 Z" fill="#2a7ae0"/><path d="M1 15 L6.5 13 L12 15.5 L6.5 17.6 Z" fill="#7ac0ff"/><path d="M6.5 17.6 L12 15.5 L11.5 22.5 L6 24.8 Z" fill="#1458b8"/></svg>
<svg class="a" style="left:66.5px;top:298.8px" width="24" height="24" viewBox="0 0 24 24">
<path d="M1 1 H10 L14.5 5.5 V17.5 H1 Z" fill="#f4f6fa" stroke="#9098a8" stroke-width="0.9"/><path d="M10 1 V5.5 H14.5" fill="#dfe4ee" stroke="#9098a8" stroke-width="0.8"/>
<path d="M3.2 5h5M3.2 7.4h8.5M3.2 9.8h8.5M3.2 12.2h8.5M3.2 14.6h6" stroke="#a8b0c0" stroke-width="0.9"/>
<path d="M12.2 10.6 L22 16.6 L12.2 22.6 Z" fill="#4cc83c" stroke="#2c9820" stroke-width="0.7"/><path d="M13 12 L19.6 16.2 L13 16.4 Z" fill="#9ae88a" opacity="0.7"/></svg>
<svg class="a" style="left:64.6px;top:359.8px" width="28" height="27" viewBox="0 0 28 27">
<ellipse cx="6" cy="14" rx="3.6" ry="9.2" transform="rotate(-14 6 14)" fill="#f04028"/><ellipse cx="5.2" cy="12" rx="1.5" ry="5.5" transform="rotate(-14 5.2 12)" fill="#ff9a80" opacity="0.7"/>
<ellipse cx="12.8" cy="10.5" rx="3.4" ry="9.4" transform="rotate(2 12.8 10.5)" fill="#58b830"/><ellipse cx="12" cy="8.5" rx="1.4" ry="5.5" fill="#a8e888" opacity="0.7"/>
<ellipse cx="20.5" cy="14.5" rx="3.6" ry="9.6" transform="rotate(22 20.5 14.5)" fill="#f0b010"/><ellipse cx="20" cy="12.5" rx="1.5" ry="5.6" transform="rotate(22 20 12.5)" fill="#ffe680" opacity="0.7"/></svg><div class="a" style="left:3px;top:392px;width:9px;height:323px;background:linear-gradient(90deg,#d6d6d9,#c2c2c6);-webkit-mask-image:linear-gradient(rgba(0,0,0,0) 0px,#000 16px);mask-image:linear-gradient(rgba(0,0,0,0) 0px,#000 16px)"></div>
<div class="a" style="left:12px;top:402px;width:799px;height:330px;background:#f0f0f0;border:1px solid #a2a2a2;border-radius:7px;overflow:hidden;box-shadow:0 0 6px rgba(0,0,0,0.25)"><div class="a" style="left:0;top:0;width:100%;height:29.5px;background:#eef3f9"></div></div>
<div class="t" style="left:16px;top:408px;font-size:15px;color:#1a1a1a;line-height:18px;letter-spacing:0">Options</div>
<div class="a" style="left:785px;top:404px;width:24.5px;height:25px;background:#c75050"></div>
<svg class="a" style="left:793.6px;top:413.2px" width="8" height="8" viewBox="0 0 8 8"><path d="M0.9 0.9 L7.1 7.1 M7.1 0.9 L0.9 7.1" stroke="#fff" stroke-width="1.9"/></svg>
<div class="a" style="left:22px;top:440.5px;width:185px;height:290px;background:#fff;border:1px solid #8c8c8c;border-right-color:#ececec"></div>
<div class="ti" style="left:42.6px;top:441.6px">General</div>
<div class="a" style="left:33px;top:450.3px;width:8px;height:0;border-top:1px dotted #c2c2c2"></div>
<div class="ti" style="left:42.6px;top:458.0px">Display</div>
<div class="a" style="left:33px;top:466.7px;width:8px;height:0;border-top:1px dotted #c2c2c2"></div>
<div class="ti" style="left:42.6px;top:474.4px">Parallel</div>
<div class="a" style="left:33px;top:483.1px;width:8px;height:0;border-top:1px dotted #c2c2c2"></div>
<div class="ti" style="left:42.6px;top:490.9px">Basic Mode</div>
<div class="a" style="left:33px;top:499.6px;width:8px;height:0;border-top:1px dotted #c2c2c2"></div>
<div class="ti" style="left:42.6px;top:507.3px">LC</div>
<div class="a" style="left:33px;top:516.0px;width:8px;height:0;border-top:1px dotted #c2c2c2"></div>
<div class="ti" style="left:58px;top:523.7px">Iteration Condition</div>
<div class="a" style="left:49px;top:532.4px;width:7px;height:0;border-top:1px dotted #c2c2c2"></div>
<div class="ti" style="left:58px;top:540.1px">Full Charge Model</div>
<div class="a" style="left:49px;top:548.8px;width:7px;height:0;border-top:1px dotted #c2c2c2"></div>
<div class="ti" style="left:58px;top:556.5px">Condition</div>
<div class="a" style="left:49px;top:565.2px;width:7px;height:0;border-top:1px dotted #c2c2c2"></div>
<div class="a" style="left:56.5px;top:574.1px;width:76px;height:16px;background:#0a6fd6;border:1px dotted #e8b070"></div>
<div class="ti" style="left:58px;top:573.0px;color:#fff">Flexoelectric</div>
<div class="a" style="left:49px;top:581.7px;width:7px;height:0;border-top:1px dotted #c2c2c2"></div>
<div class="ti" style="left:58px;top:589.4px">Charge Impurity</div>
<div class="a" style="left:49px;top:598.1px;width:7px;height:0;border-top:1px dotted #c2c2c2"></div>
<div class="ti" style="left:42.6px;top:605.8px">Optics</div>
<div class="a" style="left:33px;top:614.5px;width:8px;height:0;border-top:1px dotted #c2c2c2"></div>
<div class="ti" style="left:58px;top:622.2px">Additional Data</div>
<div class="a" style="left:49px;top:630.9px;width:7px;height:0;border-top:1px dotted #c2c2c2"></div>
<div class="ti" style="left:58px;top:638.6px">Berreman</div>
<div class="a" style="left:49px;top:647.3px;width:7px;height:0;border-top:1px dotted #c2c2c2"></div>
<div class="ti" style="left:58px;top:655.1px">Quasi-3D</div>
<div class="a" style="left:49px;top:663.8px;width:7px;height:0;border-top:1px dotted #c2c2c2"></div>
<div class="ti" style="left:42.6px;top:671.5px">RC</div>
<div class="a" style="left:33px;top:680.2px;width:8px;height:0;border-top:1px dotted #c2c2c2"></div>
<div class="a" style="left:33px;top:450.3px;width:0;height:229.9px;border-left:1px dotted #c2c2c2"></div>
<div class="a" style="left:49px;top:521.3px;width:0;height:77.1px;border-left:1px dotted #c2c2c2"></div>
<div class="a" style="left:49px;top:619.8px;width:0;height:44.3px;border-left:1px dotted #c2c2c2"></div>
<div class="a" style="left:27.5px;top:510.7px;width:11px;height:11.2px;background:linear-gradient(#fff,#e2e5ea);border:1px solid #9aa0aa;border-radius:1.5px"></div>
<div class="a" style="left:29.2px;top:515.7px;width:7.8px;height:1.2px;background:#3a4aa0"></div>
<div class="a" style="left:27.5px;top:609.2px;width:11px;height:11.2px;background:linear-gradient(#fff,#e2e5ea);border:1px solid #9aa0aa;border-radius:1.5px"></div>
<div class="a" style="left:29.2px;top:614.2px;width:7.8px;height:1.2px;background:#3a4aa0"></div>
<div class="a" style="left:217px;top:441px;width:584px;height:26.5px;background:linear-gradient(90deg,#1b84f2 0%,#2a8aee 25%,#5a9fe0 50%,#86b0d0 70%,#a9b9be 85%,#c3c2ab 100%)"></div>
<div class="t" style="left:221.5px;top:449px;font-size:10px;font-weight:bold;color:#fff;line-height:12px;letter-spacing:0.04px">LC - Flexoelectric</div>
<div class="a" style="left:217px;top:470.5px;width:584px;height:260px;border:1px solid #a5a5a5;border-right-color:#adadad;background:#f0f0f0"></div>
<div class="a" style="left:228.5px;top:489.5px;width:526px;height:50px;border:1px solid #dcdcdc"></div>
<div class="a" style="left:234px;top:485px;width:180px;height:10px;background:#f0f0f0"></div>
<div class="a" style="left:248px;top:485.6px;width:14.2px;height:14.2px;background:#0f62c0;border-radius:3px"></div>
<svg class="a" style="left:248px;top:485.6px" width="14.2" height="14.2" viewBox="0 0 14 14"><path d="M3.6 7.2 L6 9.6 L10.6 4.8" fill="none" stroke="#fff" stroke-width="1.3" stroke-linecap="round" stroke-linejoin="round"/></svg>
<div class="ti" style="left:266.5px;top:484.3px;color:#111">Apply Flexoelectric Effect</div>
<div class="ti" style="left:238px;top:511.8px;color:#111;letter-spacing:-0.292px">The flexoelectric constants (es, eb) should be defined the value in LC/Stack List tab.</div>
<svg class="a" style="left:0;top:0" width="1014" height="715" viewBox="0 0 1014 715">
<path d="M560.4 59.5 L107.1 555.1 L105.6 552.0 L101.5 566.5 L115.6 561.0 L112.3 559.9 L561.6 60.5 Z" fill="#fb1d14"/>
<path d="M136.3 577.4 L230.0 512.8 L231.2 516.9 L238.5 503.0 L223.1 505.5 L226.5 507.9 L135.7 576.6 Z" fill="#fb1d14"/>
<path d="M426.0 488.0 L789.1 469.8 L787.9 474.0 L801.5 466.0 L787.1 459.6 L788.7 463.6 L426.0 487.0 Z" fill="#fb1d14"/>
<rect x="810" y="449.1" width="180.2" height="30.8" rx="3.6" ry="3.6" fill="none" stroke="#fb1d14" stroke-width="3.4"/>
</svg></body></html>
